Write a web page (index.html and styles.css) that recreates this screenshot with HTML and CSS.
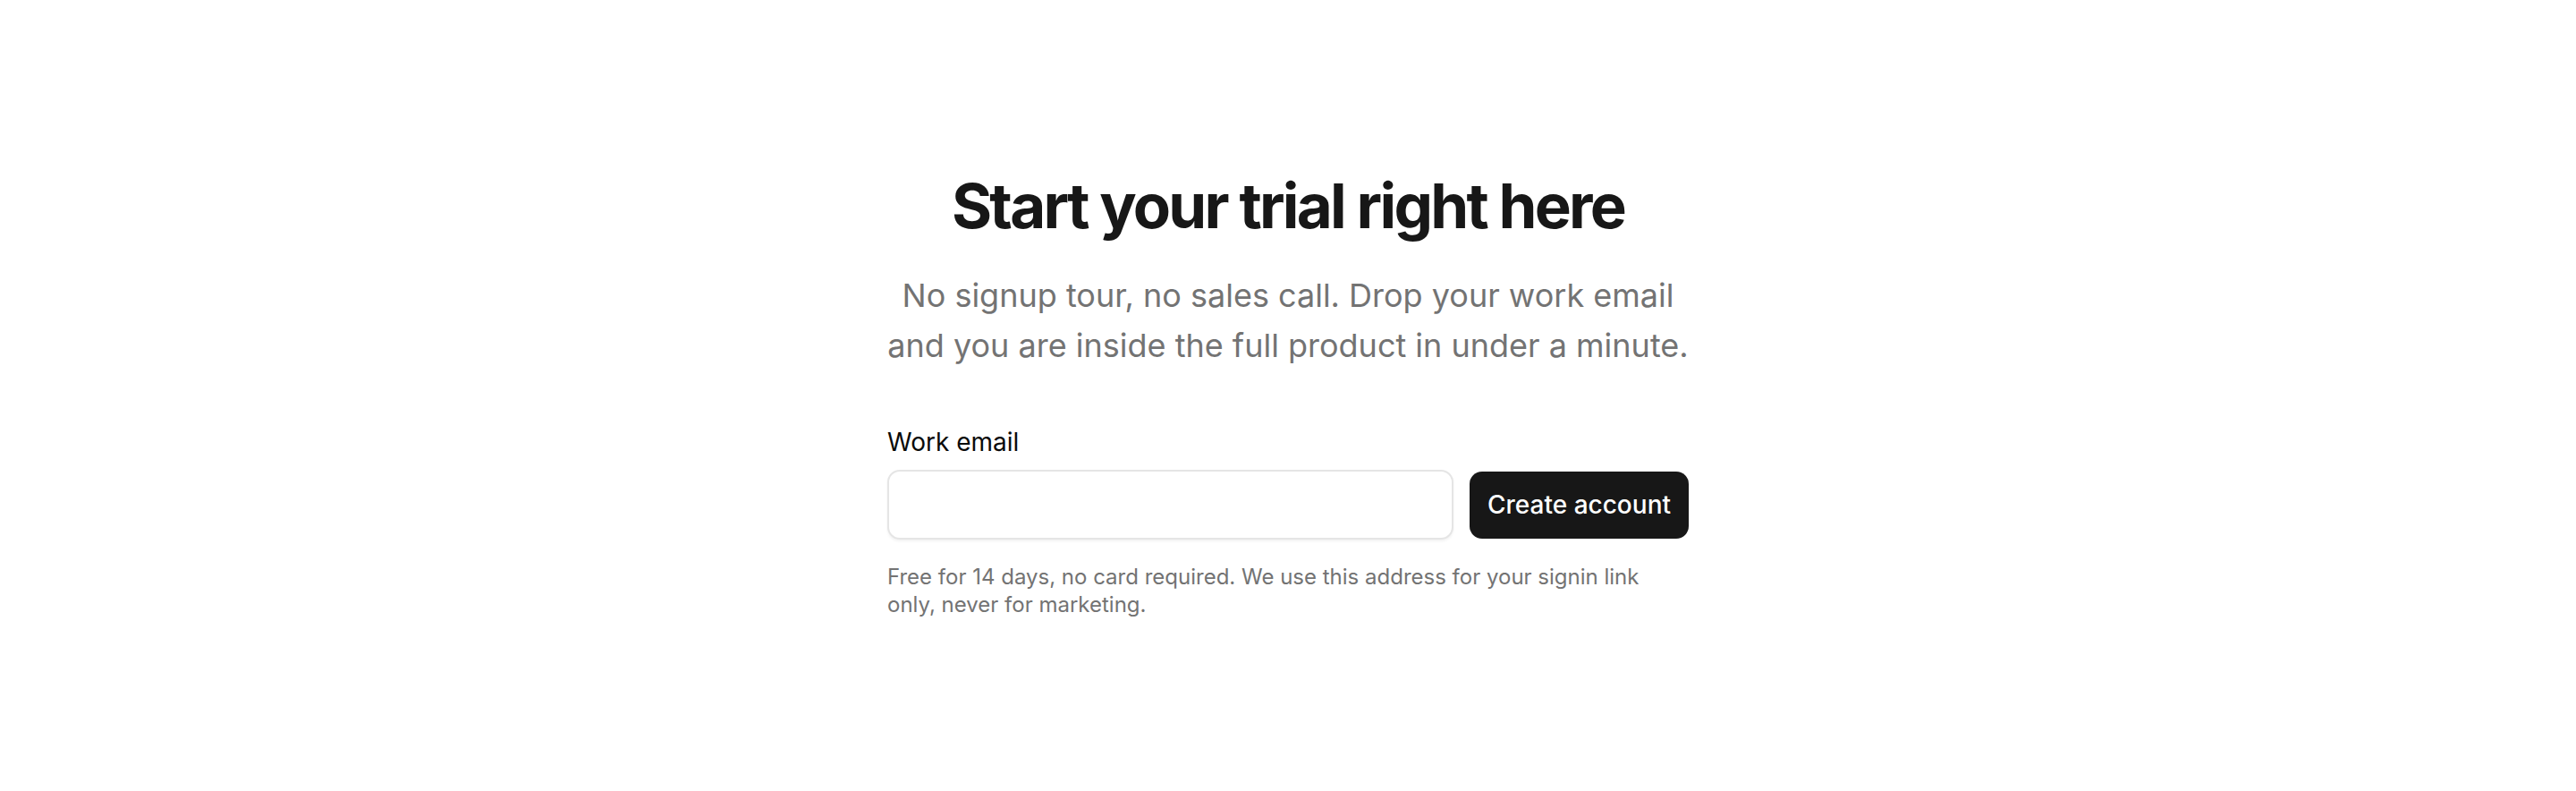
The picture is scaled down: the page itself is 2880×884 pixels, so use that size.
FILE: index.html
```html
<!DOCTYPE html>
<html lang="en">
<head>
    <meta charset="UTF-8">
    <meta name="viewport" content="width=device-width, initial-scale=1.0">
    <title>Start your trial</title>
    <link rel="stylesheet" href="styles.css">
</head>
<body>
    <main class="trial">
        <h1 class="trial-title">Start your trial right here</h1>
        <p class="trial-lead">No signup tour, no sales call. Drop your work email and you are inside the full product in under a minute.</p>

        <form class="signup" onsubmit="return false;">
            <label class="signup-label" for="email">Work email</label>
            <div class="signup-row">
                <input class="signup-input" type="email" id="email" name="email">
                <button class="btn" type="submit">Create account</button>
            </div>
            <p class="signup-note">Free for 14 days, no card required. We use this address for your signin link only, never for marketing.</p>
        </form>
    </main>
</body>
</html>
```

FILE: styles.css
```css
body {
    font-family: Inter, "Noto Sans", Arial, sans-serif;
    display: flex;
    justify-content: center;
    align-items: center;
    min-height: 100vh;
    margin: 0;
    background: #fff;
    color: #171717;
}
.trial {
    width: 896px;
    text-align: center;
}
.trial-title {
    margin: 0;
    font-size: 69px;
    font-weight: 700;
    letter-spacing: -0.04em;
    line-height: 1.1;
    color: #171717;
}
.trial-lead {
    margin: 34px 0 0;
    font-size: 36px;
    line-height: 56px;
    color: #737373;
}
.signup {
    margin-top: 63px;
    text-align: left;
}
.signup-label {
    display: block;
    font-size: 28px;
    font-weight: 400;
    color: #0a0a0a;
}
.signup-row {
    display: flex;
    align-items: center;
    gap: 18px;
    margin-top: 14px;
}
.signup-input {
    flex: 1;
    height: 78px;
    box-sizing: border-box;
    border: 2px solid #e5e5e5;
    border-radius: 14px;
    box-shadow: 0 2px 3px rgba(0, 0, 0, 0.05);
    padding: 0 20px;
    font-family: inherit;
    font-size: 28px;
    background: #fff;
}
.btn {
    height: 75px;
    padding: 0 20px;
    border: none;
    border-radius: 14px;
    background: #171717;
    color: #fff;
    font-family: inherit;
    font-size: 28px;
    font-weight: 500;
    cursor: pointer;
}
.signup-note {
    margin: 26px 0 0;
    font-size: 24px;
    line-height: 31px;
    color: #737373;
}
```
